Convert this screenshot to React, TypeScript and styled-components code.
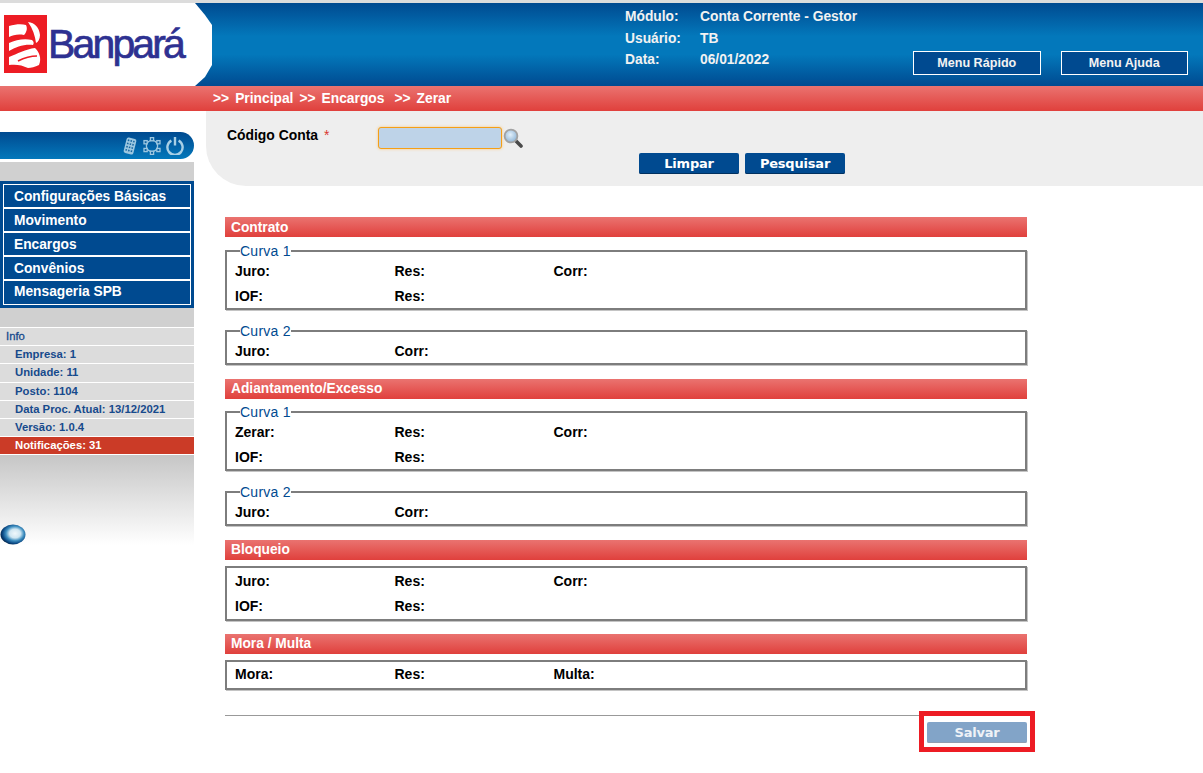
import React from "react";
import styled, { createGlobalStyle } from "styled-components";

const Global = createGlobalStyle`
  html, body { margin: 0; padding: 0; background: #fff; }
  body { font-family: "Liberation Sans", Arial, sans-serif; }
  * { box-sizing: border-box; }
`;

const Page = styled.div`
  width: 1203px;
  height: 773px;
  overflow: hidden;
  padding-top: 2px;
  background: linear-gradient(#dcdcdc, #dcdcdc) top / 100% 3px no-repeat, #fff;
`;

const Header = styled.header`
  height: 83px;
  margin-top: 1px;
  display: flex;
  background: linear-gradient(#004a90 0%, #0378bb 40%, #0378bb 62%, #004a90 100%);
`;

const LogoPanel = styled.div`
  width: 212px;
  height: 83px;
  display: flex;
  align-items: flex-start;
  padding: 12px 0 0 4px;
  gap: 1px;
  background: #fff;
  clip-path: polygon(0 0, 195px 0, 205px 12px, 212px 22px, 212px 62px, 205px 74px, 195px 83px, 0 83px);
`;

const LogoText = styled.span`
  font-size: 41px;
  line-height: 46px;
  letter-spacing: -2.85px;
  color: #2e3191;
  margin-top: 6px;
  -webkit-text-stroke: 0.7px #2e3191;
`;

const HeaderInfo = styled.div`
  width: 701px;
  padding: 3px 0 0 413px;
  display: grid;
  grid-template-columns: 75px 1fr;
  grid-auto-rows: 21.5px;
  align-items: center;
  align-content: start;
  font-size: 13.8px;
  font-weight: bold;
  color: #f2f2f2;
`;

const HeaderActions = styled.div`
  display: flex;
  gap: 20px;
  padding-top: 48px;
`;

const MenuButton = styled.button`
  width: 127.5px;
  height: 24px;
  padding: 0;
  border: 1px solid #fff;
  background: #004a90;
  color: #f2f2f2;
  font: bold 12.6px "Liberation Sans", Arial, sans-serif;
`;

const Crumbs = styled.nav`
  height: 25px;
  padding-left: 213px;
  display: flex;
  align-items: center;
  font-size: 13.8px;
  font-weight: bold;
  color: #fff;
  background: linear-gradient(#ea7370, #e0403c);
`;

const Crumb = styled.span<{ $gap: number }>`
  margin-left: ${(p) => p.$gap}px;
`;

const Body = styled.div`
  display: flex;
  align-items: flex-start;
`;

const Sidebar = styled.aside`
  width: 194px;
  padding-top: 21px;
  flex: none;
`;

const Pill = styled.div`
  height: 27px;
  border-radius: 0 14px 14px 0;
  background: linear-gradient(#004a90, #0378bb);
  display: flex;
  align-items: center;
  justify-content: flex-end;
  gap: 5px;
  padding-right: 10px;
`;

const SideBand = styled.div`
  height: 19px;
  margin-top: 3px;
  background: #d0d0d0;
`;

const MenuWrap = styled.div`
  background: #004a90;
  padding: 3px;
`;

const MenuList = styled.ul`
  list-style: none;
  margin: 0;
  padding: 0;
  border: 1px solid #fff;
`;

const MenuItem = styled.li`
  height: 24px;
  padding-left: 10px;
  font-size: 13.75px;
  font-weight: bold;
  line-height: 23.5px;
  color: #fff;
  border-bottom: 2px solid #fff;
  &:last-child {
    border-bottom: 0;
    height: 23px;
    line-height: 22px;
  }
`;

const BandLow = styled.div`
  height: 19px;
  background: #d0d0d0;
`;

const InfoList = styled.div`
  border-top: 1px solid #fff;
`;

const InfoRow = styled.div<{ $head?: boolean; $alert?: boolean }>`
  height: 18.2px;
  padding-left: ${(p) => (p.$head ? 6 : 15)}px;
  font-size: 11.3px;
  font-weight: ${(p) => (p.$head ? "normal" : "bold")};
  line-height: ${(p) => (p.$head ? 16 : 17)}px;
  color: ${(p) => (p.$alert ? "#fff" : "#174a8c")};
  background: ${(p) => (p.$alert ? "#cb3b27" : "#dcdcdc")};
  border-bottom: 1px solid #fff;
  -webkit-text-stroke: ${(p) => (p.$head ? "0.3px #174a8c" : "0")};
`;

const SideFade = styled.div`
  height: 90px;
  padding: 69px 0 0 0;
  background: linear-gradient(#c6c6c6, #fff);
`;

const Content = styled.main`
  flex: 1;
  min-width: 0;
`;

const FilterPanel = styled.section`
  margin-left: 12px;
  height: 75px;
  background: #eeeeee;
  border-bottom-left-radius: 40px;
  padding: 16px 0 0 21px;
`;

const FilterRow = styled.div`
  display: flex;
  align-items: center;
  height: 22px;
`;

const FieldLabel = styled.label`
  width: 151px;
  font-size: 13.9px;
  font-weight: bold;
  color: #000;
  margin-top: -7px;
`;

const Required = styled.span`
  color: #d9362f;
  font-weight: normal;
  margin-left: 6px;
`;

const CodeInput = styled.input`
  width: 124px;
  height: 22px;
  background: #bed3e8;
  border: 1px solid #f59f16;
  border-radius: 3px;
  box-shadow: 0 0 3px #f9c77a;
  padding: 0 4px;
  outline: none;
`;

const FilterActions = styled.div`
  display: flex;
  gap: 6px;
  margin: 4px 0 0 412px;
`;

const ActionButton = styled.button<{ $disabled?: boolean }>`
  width: 100px;
  height: 21px;
  padding: 0;
  border: 0;
  border-radius: 2px;
  font: bold 13px "DejaVu Sans", Verdana, sans-serif;
  letter-spacing: -0.2px;
  color: ${(p) => (p.$disabled ? "#eef2f7" : "#fff")};
  background: ${(p) => (p.$disabled ? "#82a4c8" : "#004a90")};
  box-shadow: inset 0 -1px 0 ${(p) => (p.$disabled ? "#8f9db0" : "#00305f")};
`;

const FormArea = styled.div`
  width: 802px;
  margin: 31px 0 0 31px;
`;

const SectionTitle = styled.h2<{ $gap?: number }>`
  margin: ${(p) => p.$gap ?? 0}px 0 0;
  height: 20px;
  padding-left: 6px;
  font-size: 13.75px;
  font-weight: bold;
  line-height: 19px;
  color: #fff;
  background: linear-gradient(#ea7370, #e0403c);
  &:first-child {
    line-height: 21px;
  }
`;

const Box = styled.fieldset<{ $height: number; $gap: number }>`
  margin: ${(p) => p.$gap}px 0 0;
  min-width: 0;
  height: ${(p) => p.$height}px;
  padding: 0 8px;
  border: 2px solid #7d7d7d;
  box-shadow: 1px 1px 0 #c4c4c4;
`;

const BoxLegend = styled.legend`
  margin-left: 5px;
  padding: 0;
  font-size: 14px;
  line-height: 14px;
  letter-spacing: 0.25px;
  color: #004a90;
`;

const FieldRow = styled.div<{ $height?: number }>`
  display: grid;
  grid-template-columns: 159.5px 159px 1fr;
  height: ${(p) => p.$height ?? 25}px;
  align-items: center;
  font-size: 14px;
  font-weight: bold;
  color: #000;
`;

const Footer = styled.footer`
  margin-top: 25px;
  border-top: 1px solid #999;
  padding-top: 6px;
  display: flex;
  justify-content: flex-end;
`;

const Highlight = styled.div`
  position: relative;
  display: flex;
  &::after {
    content: "";
    position: absolute;
    inset: -11px -8px -9px -8px;
    border: 5px solid #ed1c24;
    pointer-events: none;
  }
`;

const BanparaMark = () => (
  <svg width="43" height="58" viewBox="0 0 43 58">
    <rect width="43" height="58" fill="#ed1c24" />
    <g fill="#fff">
      <path d="M5 11 C12 9 18 9 22 10 C24 14 22 18 20 20 C14 19 9 20 5 22 Z" />
      <path d="M24 7 C31 8 35 12 36 20 C36 24 34 27 32 28 C31 21 29 14 24 7 Z" />
      <path d="M5 28 C12 25 20 23 28 25 C30 27 30 28 29 30 C20 29 12 32 5 36 Z" />
      <path d="M5 42 C13 39 22 34 31 33 C35 37 38 43 35 50 C31 52 27 53 24 53 C18 50 12 49 5 50 Z" />
    </g>
    <path d="M14 46 C20 43 26 41 33 41" stroke="#ed1c24" strokeWidth="1.6" fill="none" />
  </svg>
);

const ToolIcons = () => (
  <>
    <svg width="16" height="18" viewBox="0 0 16 18">
      <g transform="rotate(14 8 9)">
        <rect x="3" y="1" width="10" height="16" rx="2" fill="#9cc7e0" />
        <g fill="#17659f">
          {[0, 1, 2, 3].map((r) =>
            [0, 1, 2].map((c) => (
              <rect key={`${r}-${c}`} x={4.5 + c * 2.7} y={3 + r * 3.3} width="1.5" height="1.6" />
            ))
          )}
        </g>
      </g>
    </svg>
    <svg width="18" height="18" viewBox="0 0 18 18" fill="none" stroke="#9cc7e0" strokeWidth="1.3">
      <circle cx="9" cy="9" r="5.6" />
      {[[9, 2.2], [15.4, 5.2], [15.4, 13], [9, 15.8], [2.6, 13], [2.6, 5.2]].map(([x, y], i) => (
        <rect key={i} x={x - 1.6} y={y - 1.6} width="3.2" height="3.2" fill="#0f63a3" />
      ))}
    </svg>
    <svg width="18" height="19" viewBox="0 0 18 19" fill="none" stroke="#a8d0e6" strokeWidth="2.4">
      <path d="M5.4 4.6 A7.6 7.6 0 1 0 12.6 4.6" />
      <path d="M9 1 V9.5" />
    </svg>
  </>
);

const Globe = () => (
  <svg width="26" height="21" viewBox="0 0 26 21">
    <defs>
      <radialGradient id="gl" cx="0.58" cy="0.45" r="0.58">
        <stop offset="0" stopColor="#f0f8fc" />
        <stop offset="0.38" stopColor="#cfe6f2" />
        <stop offset="0.62" stopColor="#3f8fc0" />
        <stop offset="0.85" stopColor="#0b4a86" />
        <stop offset="1" stopColor="#052a50" />
      </radialGradient>
    </defs>
    <ellipse cx="13" cy="10.5" rx="12.5" ry="10" fill="url(#gl)" />
  </svg>
);

const SearchIcon = () => (
  <svg width="20" height="20" viewBox="0 0 20 20" style={{ marginLeft: 1 }}>
    <defs>
      <radialGradient id="gs" cx="0.45" cy="0.4" r="0.6">
        <stop offset="0" stopColor="#e2f0fb" />
        <stop offset="1" stopColor="#8fb5d6" />
      </radialGradient>
    </defs>
    <path d="M12.5 12.5 L18 18" stroke="#4a4a4a" strokeWidth="3.6" strokeLinecap="round" />
    <circle cx="8" cy="8" r="6.4" fill="url(#gs)" stroke="#a2a2a2" strokeWidth="1.8" />
  </svg>
);

const Fields = ({ items, height }: { items: string[]; height?: number }) => (
  <FieldRow $height={height}>
    {items.map((t) => (
      <span key={t}>{t}</span>
    ))}
  </FieldRow>
);

export default function App() {
  return (
    <Page>
      <Global />
      <Header>
        <LogoPanel>
          <BanparaMark />
          <LogoText>Banpará</LogoText>
        </LogoPanel>
        <HeaderInfo>
          <span>Módulo:</span>
          <span>Conta Corrente - Gestor</span>
          <span>Usuário:</span>
          <span>TB</span>
          <span>Data:</span>
          <span>06/01/2022</span>
        </HeaderInfo>
        <HeaderActions>
          <MenuButton>Menu Rápido</MenuButton>
          <MenuButton>Menu Ajuda</MenuButton>
        </HeaderActions>
      </Header>
      <Crumbs>
        <Crumb $gap={0}>{">>"}</Crumb>
        <Crumb $gap={6}>Principal</Crumb>
        <Crumb $gap={6}>{">>"}</Crumb>
        <Crumb $gap={6}>Encargos</Crumb>
        <Crumb $gap={10}>{">>"}</Crumb>
        <Crumb $gap={6}>Zerar</Crumb>
      </Crumbs>
      <Body>
        <Sidebar>
          <Pill>
            <ToolIcons />
          </Pill>
          <SideBand />
          <MenuWrap>
            <MenuList>
              <MenuItem>Configurações Básicas</MenuItem>
              <MenuItem>Movimento</MenuItem>
              <MenuItem>Encargos</MenuItem>
              <MenuItem>Convênios</MenuItem>
              <MenuItem>Mensageria SPB</MenuItem>
            </MenuList>
          </MenuWrap>
          <BandLow />
          <InfoList>
            <InfoRow $head>Info</InfoRow>
            <InfoRow>Empresa: 1</InfoRow>
            <InfoRow>Unidade: 11</InfoRow>
            <InfoRow>Posto: 1104</InfoRow>
            <InfoRow>Data Proc. Atual: 13/12/2021</InfoRow>
            <InfoRow>Versão: 1.0.4</InfoRow>
            <InfoRow $alert>Notificações: 31</InfoRow>
          </InfoList>
          <SideFade>
            <Globe />
          </SideFade>
        </Sidebar>
        <Content>
          <FilterPanel>
            <FilterRow>
              <FieldLabel>
                Código Conta<Required>*</Required>
              </FieldLabel>
              <CodeInput />
              <SearchIcon />
            </FilterRow>
            <FilterActions>
              <ActionButton>Limpar</ActionButton>
              <ActionButton>Pesquisar</ActionButton>
            </FilterActions>
          </FilterPanel>
          <FormArea>
            <SectionTitle>Contrato</SectionTitle>
            <Box $gap={7} $height={66}>
              <BoxLegend>Curva 1</BoxLegend>
              <Fields items={["Juro:", "Res:", "Corr:"]} />
              <Fields items={["IOF:", "Res:"]} />
            </Box>
            <Box $gap={14} $height={41}>
              <BoxLegend>Curva 2</BoxLegend>
              <Fields items={["Juro:", "Corr:"]} />
            </Box>
            <SectionTitle $gap={14}>Adiantamento/Excesso</SectionTitle>
            <Box $gap={6} $height={66}>
              <BoxLegend>Curva 1</BoxLegend>
              <Fields items={["Zerar:", "Res:", "Corr:"]} />
              <Fields items={["IOF:", "Res:"]} />
            </Box>
            <Box $gap={14} $height={41}>
              <BoxLegend>Curva 2</BoxLegend>
              <Fields items={["Juro:", "Corr:"]} />
            </Box>
            <SectionTitle $gap={14}>Bloqueio</SectionTitle>
            <Box $gap={6} $height={55}>
              <Fields items={["Juro:", "Res:", "Corr:"]} />
              <Fields items={["IOF:", "Res:"]} />
            </Box>
            <SectionTitle $gap={13}>Mora / Multa</SectionTitle>
            <Box $gap={6} $height={30}>
              <Fields items={["Mora:", "Res:", "Multa:"]} height={23} />
            </Box>
            <Footer>
              <Highlight>
                <ActionButton $disabled>Salvar</ActionButton>
              </Highlight>
            </Footer>
          </FormArea>
        </Content>
      </Body>
    </Page>
  );
}
